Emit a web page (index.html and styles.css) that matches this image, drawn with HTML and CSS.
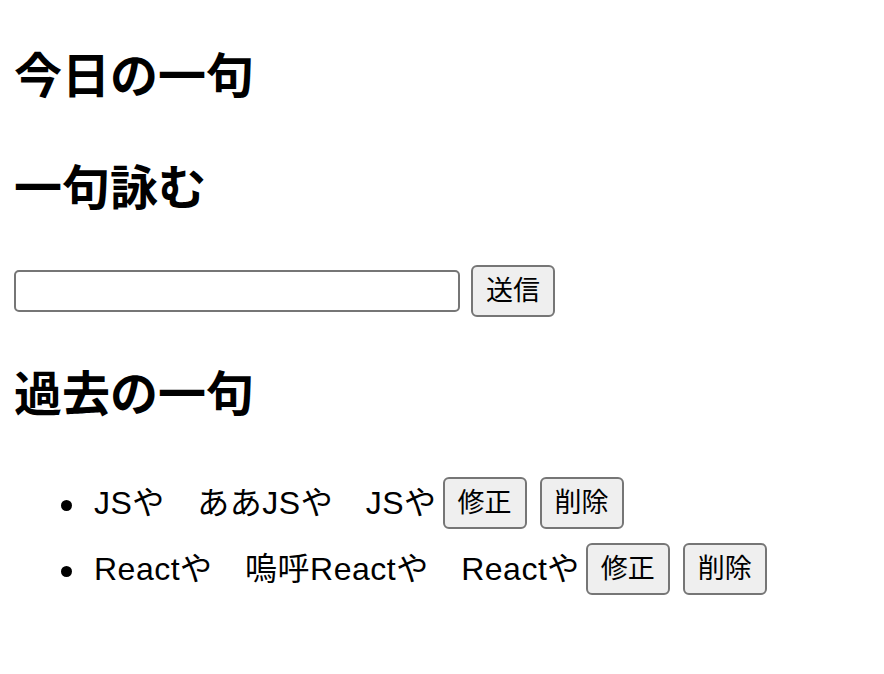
FILE: index.html
```html
<!DOCTYPE html>
<html lang="ja">
<head>
<meta charset="utf-8">
<title>今日の一句</title>
<link rel="stylesheet" href="styles.css">
</head>
<body>
<h1 class="title">今日の一句</h1>
<h2 class="section first">一句詠む</h2>
<form class="compose" onsubmit="return false">
  <input class="field" type="text">
  <button class="btn" type="submit">送信</button>
</form>
<h2 class="section past">過去の一句</h2>
<ul class="haiku-list">
  <li class="haiku">JSや　ああJSや　JSや<button class="btn">修正</button><button class="btn">削除</button></li>
  <li class="haiku">Reactや　嗚呼Reactや　Reactや<button class="btn">修正</button><button class="btn">削除</button></li>
</ul>
</body>
</html>
```
FILE: styles.css
```css
html, body {
  background: #ffffff;
}
body {
  margin: 0;
  padding: 0 14px;
  color: #000000;
  font-family: "Liberation Sans", "Noto Sans CJK JP", sans-serif;
}
.title,
.section {
  font-family: "Noto Sans CJK JP", "Liberation Sans", sans-serif;
  font-size: 48px;
  font-weight: 700;
  line-height: 56px;
  margin: 0;
}
.title {
  padding-top: 44px;
}
.section.first {
  margin-top: 56px;
}
.compose {
  display: flex;
  align-items: center;
  gap: 11px;
  height: 52px;
  margin: 53px 0 0;
}
.field {
  box-sizing: border-box;
  width: 446px;
  height: 42px;
  margin: 0;
  border: 2px solid #767676;
  border-radius: 5px;
  background: #ffffff;
  font-size: 26px;
  padding: 0 4px;
}
.btn {
  box-sizing: border-box;
  height: 52px;
  margin: 0;
  padding: 0 13px;
  border: 2px solid #767676;
  border-radius: 6px;
  background: #efefef;
  color: #000000;
  font-family: "Liberation Sans", "Noto Sans CJK JP", sans-serif;
  font-size: 27px;
  line-height: 1;
  letter-spacing: 0;
}
.section.past {
  margin-top: 45px;
}
.haiku-list {
  margin: 52px 0 0;
  padding-left: 80px;
  list-style: none;
}
.haiku {
  font-family: "Liberation Sans", "Noto Sans CJK JP", sans-serif;
  font-size: 32px;
  line-height: 66px;
  letter-spacing: 0.5px;
}
.haiku::before {
  content: "";
  display: inline-block;
  width: 11px;
  height: 11px;
  border-radius: 50%;
  background: #000000;
  margin-left: -33px;
  margin-right: 22px;
  vertical-align: middle;
}
.haiku .btn {
  vertical-align: top;
  margin-top: 7px;
  margin-left: 6px;
}
.haiku .btn + .btn {
  margin-left: 13px;
}
```
